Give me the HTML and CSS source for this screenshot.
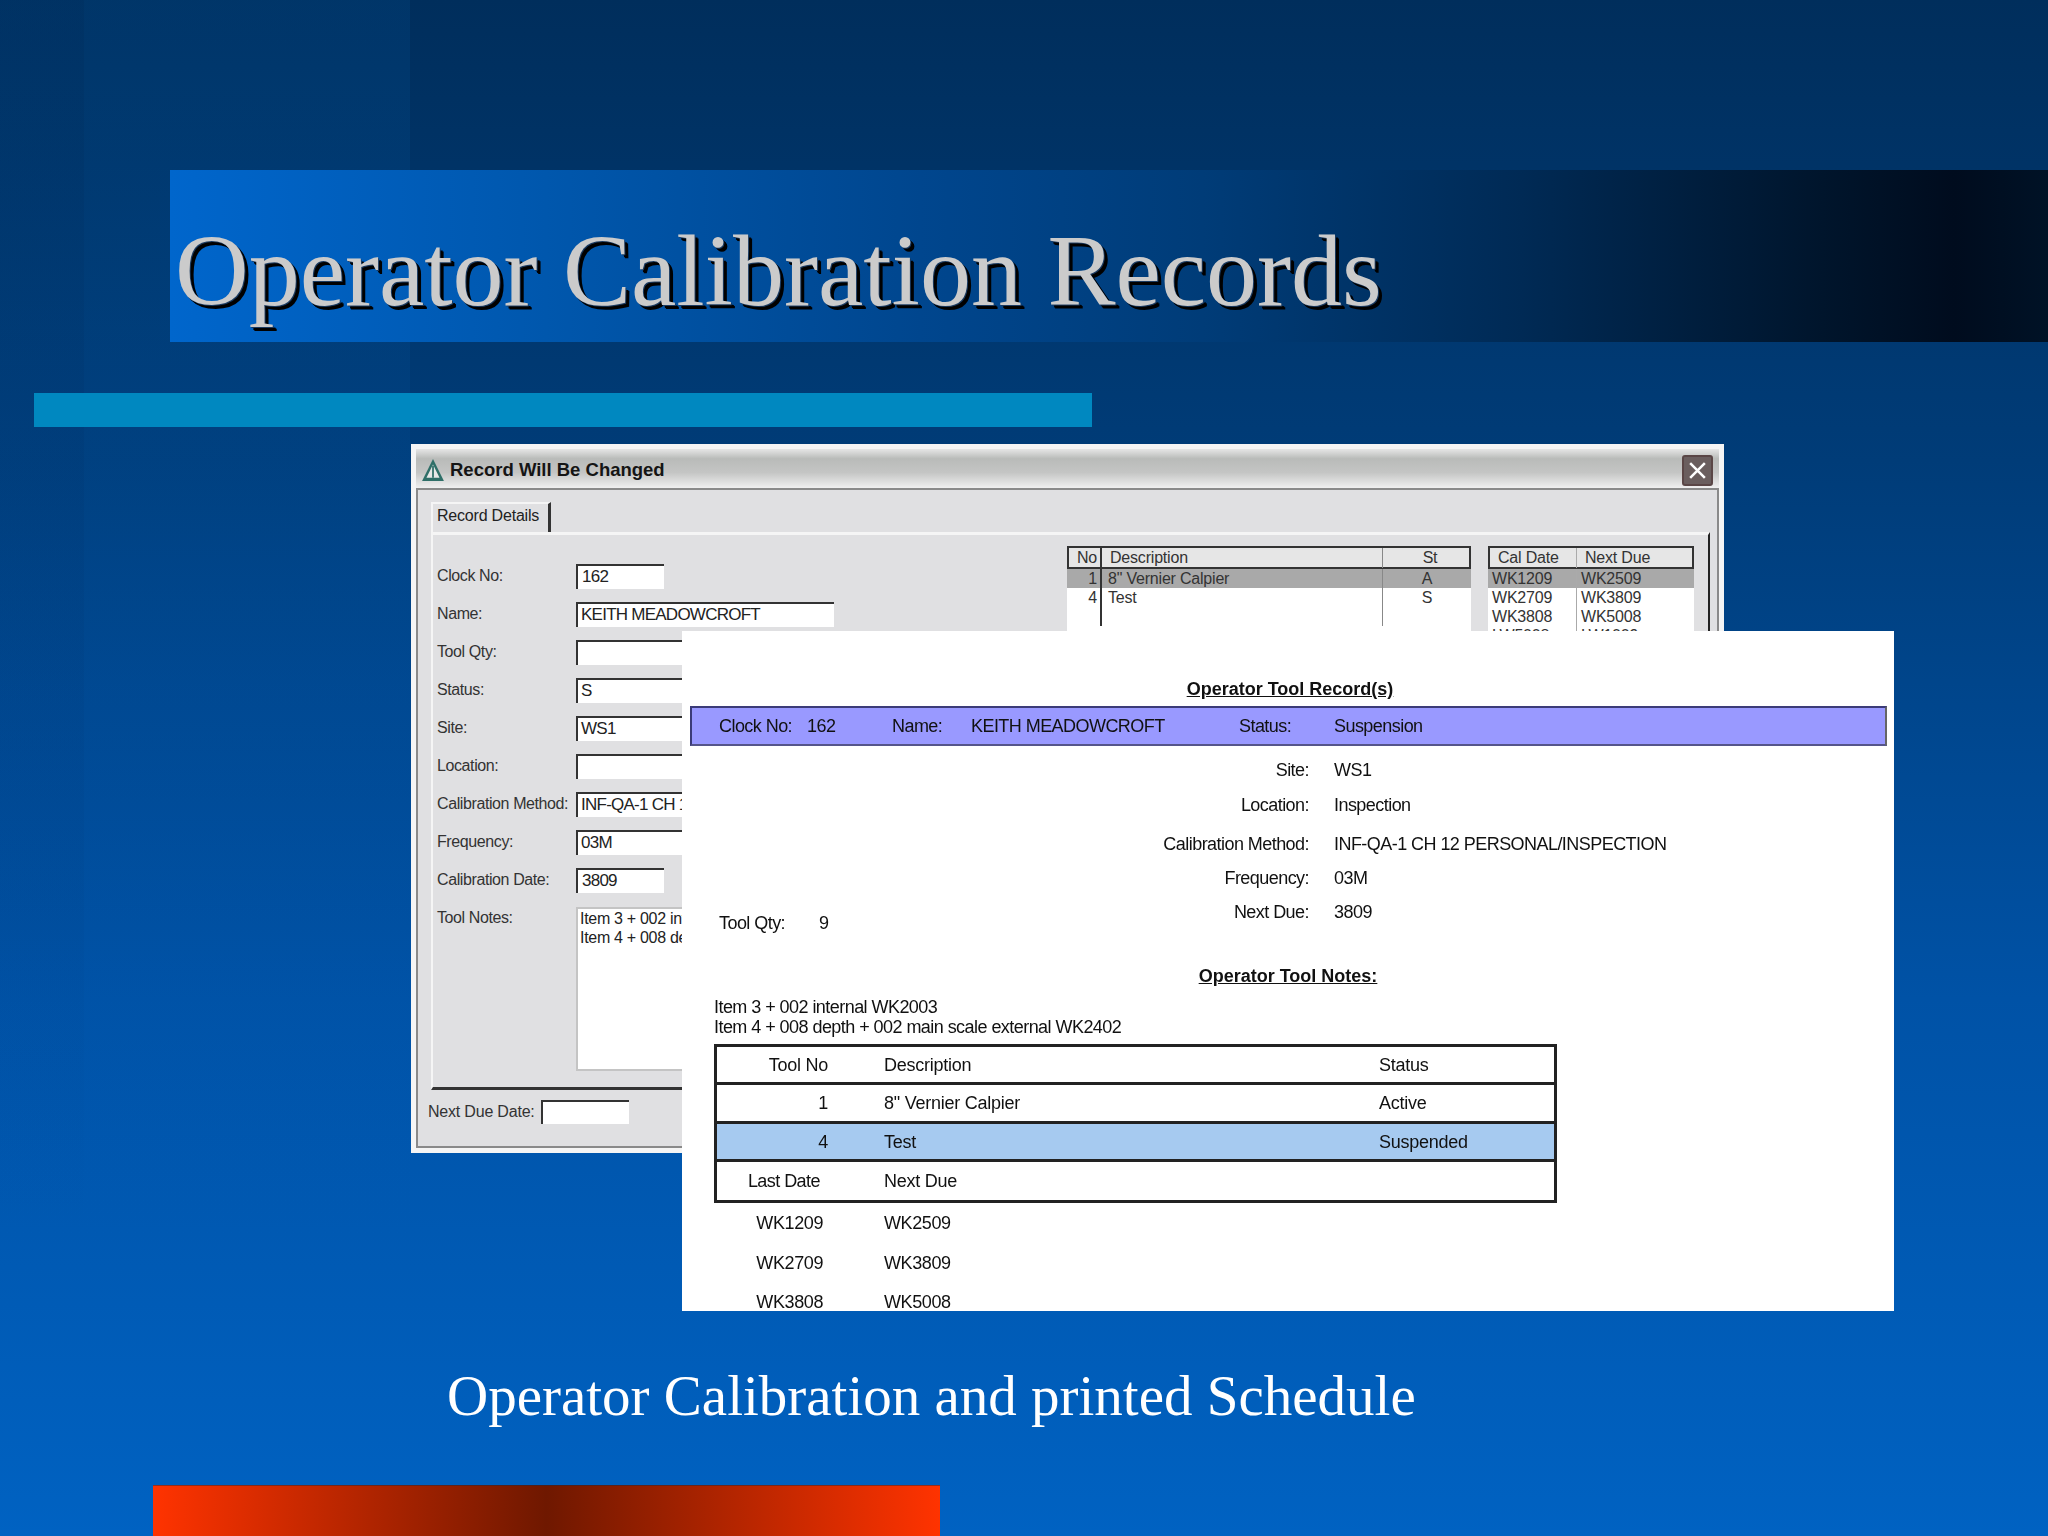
FILE: index.html
```html
<!DOCTYPE html>
<html lang="en">
<head>
<meta charset="utf-8">
<title>Operator Calibration Records</title>
<link rel="stylesheet" href="styles.css">
</head>
<body>
<main class="slide">
  <div class="band band-left" aria-hidden="true"></div>
  <div class="band band-edge" aria-hidden="true"></div>

  <h1 class="title-bar"><span class="title-text">Operator Calibration Records</span></h1>
  <div class="accent-bar"></div>

  <section class="stage">
    <div class="dialog">
      <header class="dialog-title">
        <svg class="warn-icon" viewBox="0 0 22 22" aria-hidden="true"><path d="M11 1 L21 21 H1 Z" fill="#2f6f68"/><path d="M11 6 L5 18 H17 Z" fill="#e8e8e8"/><path d="M10.2 7 h1.6 v11 h-1.6 z" fill="#2f6f68"/></svg>
        <span class="dialog-caption">Record Will Be Changed</span>
        <span class="close-btn"><svg viewBox="0 0 20 20" aria-hidden="true"><path d="M3 3 L17 17 M17 3 L3 17" stroke="#fff" stroke-width="2.4" fill="none"/></svg></span>
      </header>
      <div class="dialog-body">
        <div class="tabstrip"><span class="tab">Record Details</span></div>
        <div class="panel">
          <div class="form">
            <span class="flabel">Clock No:</span><span class="field short">162</span>
            <span class="flabel">Name:</span><span class="field">KEITH MEADOWCROFT</span>
            <span class="flabel">Tool Qty:</span><span class="field"></span>
            <span class="flabel">Status:</span><span class="field">S</span>
            <span class="flabel">Site:</span><span class="field">WS1</span>
            <span class="flabel">Location:</span><span class="field"></span>
            <span class="flabel">Calibration Method:</span><span class="field">INF-QA-1 CH 12</span>
            <span class="flabel">Frequency:</span><span class="field">03M</span>
            <span class="flabel">Calibration Date:</span><span class="field short">3809</span>
            <span class="flabel notes-label">Tool Notes:</span>
            <span class="field notes-field">Item 3 + 002 internal<br>Item 4 + 008 depth</span>
          </div>
          <div class="lists">
            <div class="list list-tools">
              <div class="lrow lhead"><span class="num">No</span><span>Description</span><span class="mid">St</span></div>
              <div class="lrow sel"><span class="num">1</span><span>8" Vernier Calpier</span><span class="mid">A</span></div>
              <div class="lrow"><span class="num">4</span><span>Test</span><span class="mid">S</span></div>
              <div class="lrow"><span class="num"></span><span></span><span class="mid"></span></div>
            </div>
            <div class="list list-dates">
              <div class="lrow lhead"><span>Cal Date</span><span>Next Due</span></div>
              <div class="lrow sel"><span>WK1209</span><span>WK2509</span></div>
              <div class="lrow"><span>WK2709</span><span>WK3809</span></div>
              <div class="lrow"><span>WK3808</span><span>WK5008</span></div>
              <div class="lrow"><span>LW5008</span><span>LW1009</span></div>
            </div>
          </div>
        </div>
        <div class="due-row"><span>Next Due Date:</span><span class="field due-field"></span></div>
      </div>
    </div>

    <div class="report">
      <h2 class="rhead">Operator Tool Record(s)</h2>
      <div class="rband">
        <span class="b-clock">Clock No:</span><span class="b-clockv">162</span>
        <span class="b-name">Name:</span><span class="b-namev">KEITH MEADOWCROFT</span>
        <span class="b-status">Status:</span><span>Suspension</span>
      </div>
      <div class="details">
        <div class="qty"><span class="qty-label">Tool Qty:</span><span>9</span></div>
        <dl class="dl">
          <dt>Site:</dt><dd>WS1</dd>
          <dt>Location:</dt><dd>Inspection</dd>
          <dt>Calibration Method:</dt><dd>INF-QA-1 CH 12 PERSONAL/INSPECTION</dd>
          <dt>Frequency:</dt><dd>03M</dd>
          <dt>Next Due:</dt><dd>3809</dd>
        </dl>
      </div>
      <h2 class="rhead notes-head">Operator Tool Notes:</h2>
      <p class="notes">Item 3 + 002 internal WK2003<br>Item 4 + 008 depth + 002 main scale external WK2402</p>
      <div class="rtable">
        <div class="trow"><span class="tnum">Tool No</span><span>Description</span><span>Status</span></div>
        <div class="trow"><span class="tnum">1</span><span>8" Vernier Calpier</span><span>Active</span></div>
        <div class="trow hl"><span class="tnum">4</span><span>Test</span><span>Suspended</span></div>
        <div class="trow"><span class="tnum tdate">Last Date</span><span>Next Due</span><span></span></div>
      </div>
      <div class="drow"><span class="dnum">WK1209</span><span>WK2509</span></div>
      <div class="drow"><span class="dnum">WK2709</span><span>WK3809</span></div>
      <div class="drow"><span class="dnum">WK3808</span><span>WK5008</span></div>
    </div>
  </section>

  <p class="caption">Operator Calibration and printed Schedule</p>
  <div class="red-bar"></div>
</main>
</body>
</html>
```
FILE: styles.css
```css
* { box-sizing: border-box; }
html, body { margin: 0; padding: 0; }
body { width: 2048px; height: 1536px; overflow: hidden; background: #0060bf; }

.slide {
  position: relative;
  width: 2048px;
  height: 1536px;
  overflow: hidden;
  display: flex;
  flex-direction: column;
  background: linear-gradient(180deg, #002e5c 0%, #003c78 30%, #0052a6 65%, #0062c2 100%);
  font-family: "Liberation Sans", Arial, sans-serif;
  color: #111;
}
.band { position: absolute; top: 0; bottom: 0; left: 0; pointer-events: none; }
.band-left { width: 410px; background: linear-gradient(180deg, rgba(0, 80, 150, .22), rgba(0, 90, 180, .16) 45%, rgba(0, 98, 194, 0) 85%); }
.band-edge { width: 84px; background: linear-gradient(180deg, rgba(0, 30, 70, .14), rgba(0, 50, 110, .1) 50%, rgba(0, 98, 194, 0) 80%); }

.title-bar {
  position: relative;
  margin: 170px 0 0 170px;
  height: 172px;
  padding-left: 5px;
  font: 400 102px/172px "Liberation Serif", "Times New Roman", serif;
  color: #cbcbcb;
  text-shadow: 1px 1px 0 #1a3a60, 3px 3px 0 #000, 4px 4px 0 #000;
  background: linear-gradient(90deg, #0066cc 0%, #0057ad 20%, #00468e 40%, #003c78 55%, #002a55 72%, #00152c 88%, #000c1e 95%, #001226 100%);
}
.title-text { display: block; position: relative; top: 15px; }
.accent-bar { position: relative; margin: 51px 0 0 34px; width: 1058px; height: 34px; background: #0088c0; }

.stage { position: relative; height: 900px; filter: blur(.45px); }

.dialog {
  position: absolute;
  left: 411px;
  top: 17px;
  width: 1313px;
  height: 709px;
  display: flex;
  flex-direction: column;
  border: 5px solid #f5f5f5;
  box-shadow: inset 0 0 0 2px #8a8a8a;
  background: #e0e0e2;
  overflow: hidden;
}
.dialog-title {
  display: flex;
  align-items: center;
  height: 41px;
  flex: none;
  padding: 3px 6px 0 5px;
  border-bottom: 2px solid #8a8a8a;
  background: linear-gradient(180deg, #e6e6e6 0%, #b9bbb9 25%, #c4c5c4 60%, #f0f0f0 100%);
}
.warn-icon { width: 24px; height: 24px; flex: none; }
.dialog-caption { margin-left: 5px; font-size: 18.5px; font-weight: 700; color: #151515; }
.close-btn {
  margin-left: auto;
  width: 31px;
  height: 31px;
  padding: 3px;
  border-radius: 3px;
  background: #6a5e5e;
  border: 2px solid #5a4646;
}
.close-btn svg { display: block; width: 100%; height: 100%; }

.dialog-body { flex: 1; display: flex; flex-direction: column; padding: 0 9px 0 12px; min-height: 0; }
.tabstrip { height: 42px; flex: none; padding: 12px 0 0 3px; }
.tab {
  display: block;
  width: 120px;
  height: 30px;
  padding: 0 0 0 4px;
  font-size: 16px;
  line-height: 24px;
  color: #222;
  border-top: 2px solid #f5f5f5;
  border-left: 2px solid #f5f5f5;
  border-right: 3px solid #333;
  letter-spacing: -.2px;
}
.panel {
  flex: none;
  margin-left: 3px;
  height: 558px;
  display: flex;
  justify-content: space-between;
  border-top: 3px solid #f5f5f5;
  border-left: 2px solid #f5f5f5;
  border-right: 2px solid #222;
  border-bottom: 3px solid #333;
  padding: 22px 14px 0 4px;
}
.form {
  display: grid;
  grid-template-columns: 139px 258px;
  grid-auto-rows: 38px;
  align-items: center;
  justify-items: start;
  font-size: 16px;
  color: #333;
  letter-spacing: -.4px;
}
.field {
  display: block;
  width: 258px;
  height: 25px;
  padding: 0 0 0 3px;
  background: #fff;
  border-top: 2px solid #333;
  border-left: 2px solid #333;
  color: #222;
  font-size: 17px;
  line-height: 21px;
  letter-spacing: -.75px;
  white-space: nowrap;
  overflow: hidden;
}
.short { width: 88px; padding-left: 4px; }
.notes-label { align-self: start; margin-top: 10px; }
.notes-field {
  align-self: start;
  height: 164px;
  margin-top: 8px;
  border: 2px solid #c4c4c4;
  border-right: 0;
  padding: 0 0 0 2px;
  line-height: 19px;
  font-size: 16px;
  letter-spacing: -.3px;
  grid-row: span 5;
}
.lists { display: flex; gap: 17px; margin-top: -11px; }
.list { background: #fff; height: 120px; font-size: 16px; color: #333; letter-spacing: -.2px; }
.list-tools { width: 404px; }
.list-dates { width: 206px; }
.lrow { display: grid; height: 19px; line-height: 19px; white-space: nowrap; }
.list-tools .lrow { grid-template-columns: 35px 281px 1fr; }
.list-dates .lrow { grid-template-columns: 89px 1fr; }
.lrow > span { padding-left: 6px; }
.list-dates .lrow > span { padding-left: 4px; }
.list-tools .lrow > span:nth-child(1) { border-right: 2px solid #333; padding: 0 3px 0 0; }
.list-tools .lrow > span:nth-child(2) { border-right: 1px solid #888; }
.list-dates .lrow > span:nth-child(1) { border-right: 1px solid #aaa; }
.lrow .num { text-align: right; }
.lrow .mid { text-align: center; padding: 0; }
.lhead { height: 23px; line-height: 20px; background: #e6e6e6; border: 2px solid #333; }
.list .lhead > span { border-right: 2px solid #333; padding-left: 8px; }
.list-tools .lhead { grid-template-columns: 33px 281px 1fr; }
.list-dates .lhead { grid-template-columns: 87px 1fr; }
.list .lhead > span:last-child { border-right: 0; }
.list .lhead .num { padding: 0 3px 0 0; }
.sel { background: #a9a9a9; }

.due-row { display: flex; align-items: center; gap: 6px; height: 43px; flex: none; font-size: 16px; color: #333; letter-spacing: -.2px; }
.due-field { width: 88px; height: 24px; }

.report {
  position: absolute;
  left: 682px;
  top: 204px;
  width: 1212px;
  height: 680px;
  overflow: hidden;
  background: #fff;
  font-size: 18px;
  line-height: 22px;
  letter-spacing: -.55px;
  color: #111;
}
.rhead { margin: 47px 0 0; height: 22px; font-size: 18px; font-weight: 700; line-height: 22px; letter-spacing: 0; text-decoration: underline; text-align: center; padding-left: 4px; color: #111; }
.rband {
  display: flex;
  align-items: center;
  margin: 6px 7px 0 8px;
  height: 40px;
  padding-left: 27px;
  background: #9999ff;
  border: 2px solid #3b3b78;
  border-right-color: #666;
  border-bottom-color: #55558a;
}
.b-clock { width: 88px; }
.b-clockv { width: 85px; }
.b-name { width: 79px; }
.b-namev { width: 268px; }
.b-status { width: 95px; }

.details { display: flex; align-items: flex-end; margin-top: 6px; padding-left: 37px; }
.qty { display: flex; flex: none; width: 130px; height: 22px; }
.qty-label { width: 100px; }
.dl {
  flex: 1;
  display: grid;
  grid-template-columns: 460px 1fr;
  grid-template-rows: 36px 34px 44px 24px 44px;
  column-gap: 25px;
  align-items: center;
  margin: 0;
}
.dl dt { text-align: right; }
.dl dd { margin: 0; }
.notes-head { margin-top: 31px; padding-left: 0; }
.notes { margin: 10px 0 0 32px; line-height: 20px; }
.rtable { margin: 7px 0 0 32px; width: 843px; height: 159px; border: 3px solid #222; display: grid; grid-auto-rows: 1fr; letter-spacing: -.25px; }
.trow {
  display: grid;
  grid-template-columns: 111px 439px 1fr;
  column-gap: 56px;
  align-items: center;
  border-bottom: 3px solid #222;
  padding-top: 1px;
}
.trow:last-child { border-bottom: 0; }
.tnum { text-align: right; }
.tdate { padding-right: 8px; letter-spacing: -.55px; }
.hl { background: #a6caf0; }
.drow { display: grid; grid-template-columns: 141px 1fr; column-gap: 61px; height: 39.5px; line-height: 39.5px; position: relative; top: 1px; letter-spacing: -.4px; }
.dnum { text-align: right; }

.caption {
  position: relative;
  margin: 34px 0 0 447px;
  font: 400 57px/70px "Liberation Serif", "Times New Roman", serif;
  color: #fff;
  white-space: nowrap;
}
.red-bar {
  position: relative;
  margin: auto 0 0 153px;
  width: 787px;
  height: 51px;
  background: linear-gradient(90deg, #ff3300 0%, #6f1800 50%, #ff3300 100%);
  box-shadow: inset 0 1px 0 rgba(40, 40, 60, .5);
}
```
